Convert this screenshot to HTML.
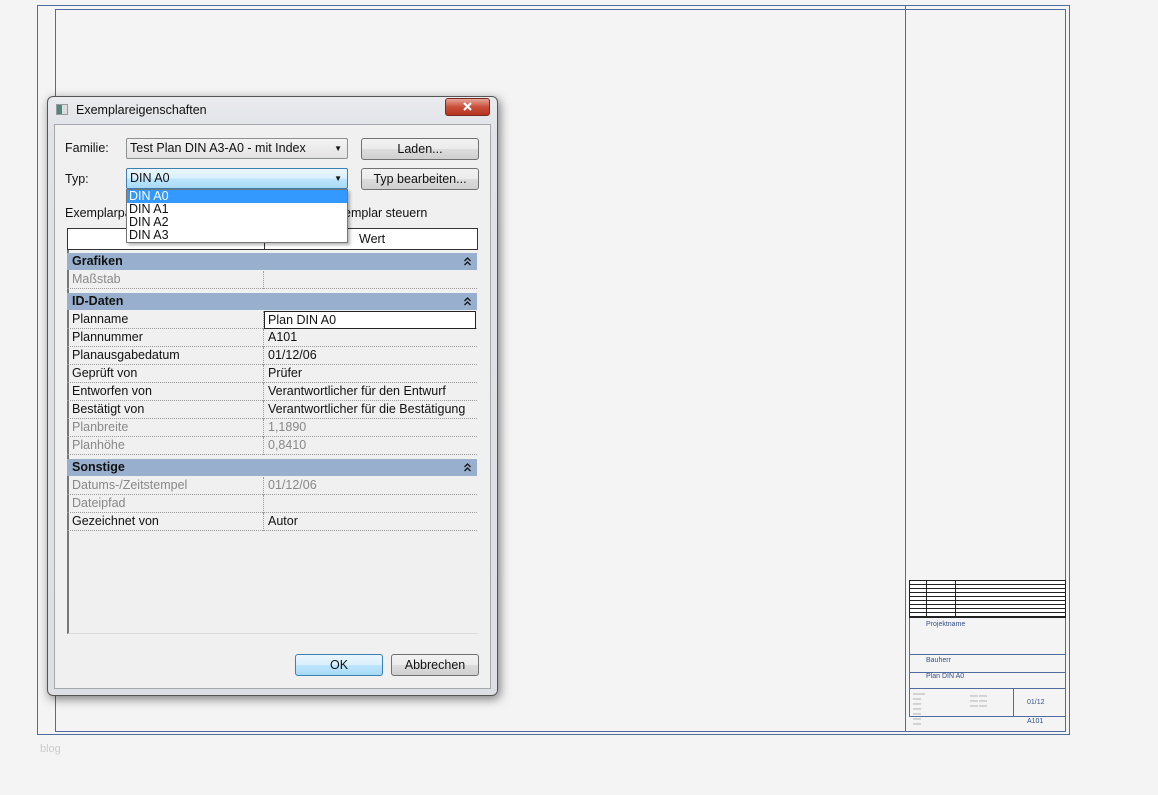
<!DOCTYPE html>
<html><head><meta charset="utf-8">
<style>
*{margin:0;padding:0;box-sizing:border-box}
body{width:1158px;height:795px;background:#f4f4f4;position:relative;overflow:hidden;font-family:"Liberation Sans",sans-serif;font-size:12px;color:#111}
.a{position:absolute}
.ln{position:absolute;background:#4e6d9e}
.btn{position:absolute;border:1px solid #707070;border-radius:3px;background:linear-gradient(#f2f2f2,#ebebeb 50%,#dddddd 51%,#cfcfcf);text-align:center;line-height:20px;font-size:12.5px}
.row{position:absolute;left:67px;width:410px;height:18px;border-bottom:1px dotted #999;line-height:17px;font-size:12.5px}
.row .k{position:absolute;left:5px}
.row .v{position:absolute;left:201px}
.row .sep{position:absolute;left:196px;top:0;height:18px;border-left:1px dotted #999}
.g{color:#888}
.grp{position:absolute;left:67px;width:410px;height:17px;background:#98b0cd;font-weight:bold;line-height:17px;padding-left:5px;font-size:12.5px}
.grp svg{position:absolute;right:6px;top:4px}
.t{position:absolute;font-size:4px;color:#999}
</style></head><body>
<div class="a" style="left:37px;top:5px;width:1033px;height:730px;border:1px solid #4e6d9e"></div>
<div class="a" style="left:55px;top:9px;width:1011px;height:723px;border:1px solid #4e6d9e"></div>
<div class="ln" style="left:905px;top:5px;width:1px;height:727px"></div>
<div class="a" style="left:40px;top:743px;color:#ccc;font-size:11px">blog</div>

<div class="a" style="left:909px;top:580px;width:157px;height:137px;border:1px solid #4e6d9e"></div>
<div class="a" style="left:909px;top:580px;width:157px;height:38px;border:1px solid #222;background:repeating-linear-gradient(#fff 0,#fff 3px,#222 3px,#222 4px)"></div>
<div class="a" style="left:926px;top:580px;width:1px;height:38px;background:#222"></div>
<div class="a" style="left:955px;top:580px;width:1px;height:38px;background:#222"></div>
<div class="ln" style="left:909px;top:654px;width:157px;height:1px"></div>
<div class="ln" style="left:909px;top:672px;width:157px;height:1px"></div>
<div class="ln" style="left:909px;top:688px;width:157px;height:1px"></div>
<div class="ln" style="left:1013px;top:688px;width:1px;height:29px"></div>
<div class="a" style="left:926px;top:621px;font-size:7px;color:#35508a">Projektname</div>
<div class="a" style="left:926px;top:657px;font-size:7px;color:#35508a">Bauherr</div>
<div class="a" style="left:926px;top:673px;font-size:7px;color:#35508a">Plan DIN A0</div>
<div class="a" style="left:1027px;top:699px;font-size:7px;color:#35508a">01/12</div>
<div class="a" style="left:1027px;top:718px;font-size:7px;color:#35508a">A101</div>
<div class="t" style="left:913px;top:691px;line-height:5px">xxxxxx<br>xxxx<br>xxxx<br>xxxx<br>xxxx<br>xxxx<br>xxxx</div>
<div class="t" style="left:970px;top:693px;line-height:5px">xxxx xxxx<br>xxxx xxxx<br>xxxx xxxx</div>

<div class="a" style="left:47px;top:96px;width:451px;height:600px;border:1px solid #555;border-radius:6px;background:linear-gradient(#e9ebee,#dfe2e6 40px,#dcdfe3);box-shadow:2px 3px 10px rgba(0,0,0,.5)"></div>
<div class="a" style="left:56px;top:104px;width:12px;height:11px;border:1px solid #999;background:linear-gradient(90deg,#4d8a7d 50%,#ddd 50%)"></div>
<div class="a" style="left:76px;top:103px;font-size:12.5px">Exemplareigenschaften</div>
<div class="a" style="left:445px;top:98px;width:45px;height:18px;border:1px solid #7a2a20;border-radius:3px;background:linear-gradient(#e6a497,#c94f3a 50%,#b53420)"><svg width="43" height="16" style="position:absolute;left:0;top:0"><path d="M18 4 L25 11 M25 4 L18 11" stroke="#fff" stroke-width="2.2"/></svg></div>
<div class="a" style="left:54px;top:124px;width:437px;height:565px;background:#f0f0f0;border:1px solid #a5a9ae"></div>

<div class="a" style="left:65px;top:141px;font-size:12.5px">Familie:</div>
<div class="a" style="left:126px;top:138px;width:222px;height:21px;border:1px solid #8e8f8f;border-radius:2px;background:linear-gradient(#f3f3f3,#e3e3e3);line-height:19px;padding-left:3px;font-size:12.5px">Test Plan DIN A3-A0 - mit Index<span style="position:absolute;right:5px;font-size:8px">▼</span></div>
<div class="btn" style="left:361px;top:138px;width:118px;height:22px">Laden...</div>
<div class="a" style="left:65px;top:172px;font-size:12.5px">Typ:</div>
<div class="a" style="left:126px;top:168px;width:222px;height:21px;border:1px solid #3c7fb1;border-radius:2px;background:linear-gradient(#eaf6fd,#d9f0fc 50%,#bee6fd 51%,#a7d9f5);line-height:19px;padding-left:3px;font-size:12.5px">DIN A0<span style="position:absolute;right:5px;font-size:8px">▼</span></div>
<div class="btn" style="left:361px;top:168px;width:118px;height:22px">Typ bearbeiten...</div>

<div class="a" style="left:65px;top:206px;font-size:12.5px">Exemplarpar</div>
<div class="a" style="left:344px;top:206px;font-size:12.5px">emplar steuern</div>

<div class="a" style="left:67px;top:228px;width:411px;height:406px;border-left:2px solid #777;border-bottom:1px solid #ddd"></div>
<div class="a" style="left:67px;top:228px;width:411px;height:22px;border:1px solid #333;background:#fff"></div>
<div class="a" style="left:264px;top:228px;width:1px;height:22px;background:#333"></div>
<div class="a" style="left:359px;top:232px;font-size:12.5px">Wert</div>

<div class="grp" style="top:253px">Grafiken<svg width="7" height="9"><path d="M0.5 4 L3.5 1 L6.5 4 M0.5 8 L3.5 5 L6.5 8" stroke="#111" fill="none" stroke-width="1.3"/></svg></div>
<div class="row g" style="top:271px"><span class="k">Maßstab</span><span class="sep"></span></div>
<div class="grp" style="top:293px">ID-Daten<svg width="7" height="9"><path d="M0.5 4 L3.5 1 L6.5 4 M0.5 8 L3.5 5 L6.5 8" stroke="#111" fill="none" stroke-width="1.3"/></svg></div>
<div class="row" style="top:311px"><span class="k">Planname</span><span class="sep"></span><span class="a" style="left:197px;top:0;width:212px;height:18px;border:1px solid #222;background:#fff;padding-left:3px;line-height:16px">Plan DIN A0</span></div>
<div class="row" style="top:329px"><span class="k">Plannummer</span><span class="sep"></span><span class="v">A101</span></div>
<div class="row" style="top:347px"><span class="k">Planausgabedatum</span><span class="sep"></span><span class="v">01/12/06</span></div>
<div class="row" style="top:365px"><span class="k">Geprüft von</span><span class="sep"></span><span class="v">Prüfer</span></div>
<div class="row" style="top:383px"><span class="k">Entworfen von</span><span class="sep"></span><span class="v">Verantwortlicher für den Entwurf</span></div>
<div class="row" style="top:401px"><span class="k">Bestätigt von</span><span class="sep"></span><span class="v">Verantwortlicher für die Bestätigung</span></div>
<div class="row g" style="top:419px"><span class="k">Planbreite</span><span class="sep"></span><span class="v">1,1890</span></div>
<div class="row g" style="top:437px"><span class="k">Planhöhe</span><span class="sep"></span><span class="v">0,8410</span></div>
<div class="grp" style="top:459px">Sonstige<svg width="7" height="9"><path d="M0.5 4 L3.5 1 L6.5 4 M0.5 8 L3.5 5 L6.5 8" stroke="#111" fill="none" stroke-width="1.3"/></svg></div>
<div class="row g" style="top:477px"><span class="k">Datums-/Zeitstempel</span><span class="sep"></span><span class="v">01/12/06</span></div>
<div class="row g" style="top:495px"><span class="k">Dateipfad</span><span class="sep"></span></div>
<div class="row" style="top:513px"><span class="k">Gezeichnet von</span><span class="sep"></span><span class="v">Autor</span></div>

<div class="a" style="left:126px;top:189px;width:222px;height:54px;background:#fff;border:1px solid #777;box-shadow:2px 2px 3px rgba(0,0,0,.3);line-height:13px;font-size:12.5px">
<div style="background:#3399ff;color:#fff;padding-left:2px">DIN A0</div>
<div style="padding-left:2px">DIN A1</div>
<div style="padding-left:2px">DIN A2</div>
<div style="padding-left:2px">DIN A3</div>
</div>

<div class="btn" style="left:295px;top:654px;width:88px;height:22px;border-color:#3c7fb1;background:linear-gradient(#eaf6fd,#d9f0fc 50%,#bee6fd 51%,#a7d9f5)">OK</div>
<div class="btn" style="left:391px;top:654px;width:88px;height:22px">Abbrechen</div>
</body></html>
